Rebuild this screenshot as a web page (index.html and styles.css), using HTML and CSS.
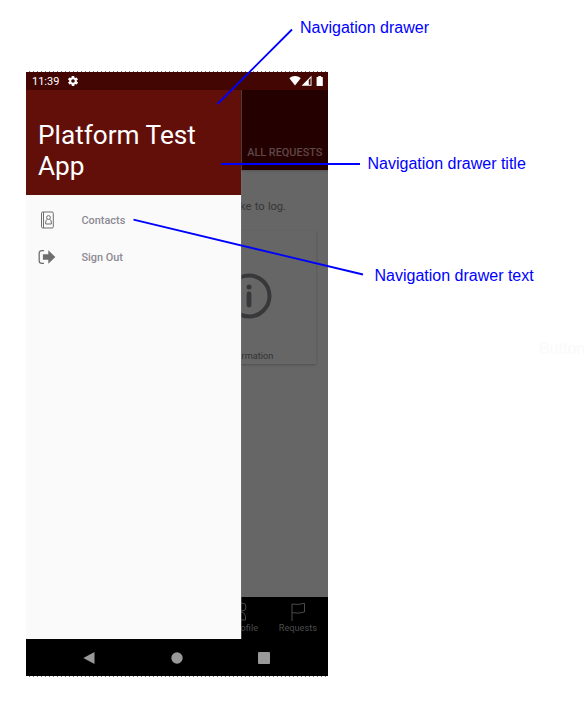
FILE: index.html
```html
<!DOCTYPE html>
<html lang="en">
<head>
<meta charset="utf-8">
<title>Navigation drawer</title>
<link rel="stylesheet" href="styles.css">
</head>
<body>
<main class="figure">
  <section class="phone">
    <header class="status">
      <span class="time">11:39</span>
      <svg class="gear" viewBox="0 0 24 24" width="12" height="12"><path fill="#fff" fill-rule="evenodd" d="M19.4 13c.1-.6.1-1.400 0-2l2.100-1.600c.2-.2.3-.4.1-.7l-2-3.400c-.1-.2-.4-.3-.6-.2l-2.500 1c-.5-.4-1.100-.7-1.700-1l-.4-2.600c0-.3-.2-.5-.5-.5h-4c-.3 0-.5.2-.5.500l-.4 2.600c-.6.3-1.200.6-1.700 1l-2.500-1c-.2-.1-.5 0-.6.2l-2 3.400c-.1.3-.1.500.1.700L4.600 11c-.1.6-.1 1.400 0 2l-2.100 1.600c-.2.2-.2.500-.1.700l2 3.400c.1.2.4.3.6.2l2.500-1c.5.4 1.100.7 1.700 1l.4 2.600c0 .3.2.5.500.5h4c.3 0 .5-.2.500-.5l.4-2.600c.6-.3 1.200-.6 1.700-1l2.500 1c.2.1.500 0 .6-.2l2-3.400c.2-.2.1-.5-.1-.7zM12 15.600a3.600 3.600 0 1 1 0-7.200 3.600 3.600 0 0 1 0 7.200z"/></svg>
      <svg class="signals" viewBox="0 0 36 12" width="36" height="12">
        <path fill="#fff" d="M.4 3.300C3.500.2 8.600.2 11.700 3.300L6 10.600z"/>
        <path fill="#fff" d="M12.600 10.700L22.500.7v10z"/>
        <path fill="#430603" d="M19.800 4.900l1.800-1.800v6.700h-1.800z"/>
        <path fill="#fff" d="M27.600 2h1.700V.9h2.800V2h1.700v8.900h-6.200z"/>
      </svg>
    </header>
    <div class="screen">
      <div class="page">
        <div class="appbar"><span>ALL REQUESTS</span></div>
        <div class="content">
          <p class="intro">like to log.</p>
          <article class="card">
            <svg class="info" viewBox="0 0 46 46" width="46" height="46"><circle cx="23" cy="23" r="20.500" fill="none" stroke="#38383b" stroke-width="4"/><circle cx="23" cy="14" r="2.500" fill="#38383b"/><path d="M23 21v11" stroke="#38383b" stroke-width="4.800" stroke-linecap="round"/></svg>
            <span>Information</span>
          </article>
        </div>
        <nav class="tabs">
          <div class="tab">
            <svg viewBox="0 0 18 20" width="18" height="20" fill="none" stroke="#484848"><circle cx="6" cy="5" r="4"/><path d="M1 18v-3q0-4 3-5h2q3.500 1 3.500 5v3z"/></svg>
            <span>Profile</span>
          </div>
          <div class="tab">
            <svg viewBox="0 0 18 20" width="18" height="20" fill="none" stroke="#4c4c4c"><path d="M3 19V2q6 1.200 12.500-.700v8.700Q9 12 3 10.600"/></svg>
            <span>Requests</span>
          </div>
        </nav>
      </div>
      <aside class="drawer">
        <h1>Platform Test App</h1>
        <ul>
          <li>
            <svg viewBox="0 0 18 18" width="18" height="18" fill="none" stroke="#6e6e6e"><rect x="3.500" y="1" width="11.800" height="16" rx="1.200"/><path d="M5.500 1v16"/><circle cx="10.500" cy="6.500" r="1.900"/><path d="M9.300 8.400Q7.700 9 7.700 11v2h5.600v-2q0-2-1.600-2.600"/></svg>
            <span>Contacts</span>
          </li>
          <li>
            <svg viewBox="0 0 18 18" width="18" height="18"><path d="M6 2.700H4Q1.200 2.700 1.200 5v8q0 2.300 2.800 2.300H6" fill="none" stroke="#6e6e6e" stroke-width="1.300"/><path d="M4.900 6.300h5.400V2.300L17.300 9l-7 6.700v-4h-5.400z" fill="#6e6e6e"/></svg>
            <span>Sign Out</span>
          </li>
        </ul>
      </aside>
    </div>
    <footer class="system">
      <svg viewBox="0 0 12 12" width="12" height="12"><path d="M.3 6L11.500 0v12z" fill="#999"/></svg>
      <svg viewBox="0 0 12 12" width="12" height="12"><circle cx="6" cy="6" r="5.700" fill="#999"/></svg>
      <svg viewBox="0 0 12 12" width="12" height="12"><rect width="12" height="12" rx="1" fill="#999"/></svg>
    </footer>
  </section>
  <svg class="leaders" viewBox="0 0 584 703" width="584" height="703" stroke="#00f" stroke-width="1.800"><path d="M292 29.500L217.500 104M221 164H360M133.500 219.700L363 274.500"/></svg>
  <span class="note note-drawer">Navigation drawer</span>
  <span class="note note-title">Navigation drawer title</span>
  <span class="note note-text">Navigation drawer text</span>
  <span class="note note-button">Button</span>
</main>
</body>
</html>
```
FILE: styles.css
```css
* { box-sizing: border-box; }
body { margin: 0; background: #fff; font-family: Roboto, sans-serif; }
.figure { position: relative; width: 584px; height: 703px; padding: 71px 0 0 26px; overflow: hidden; }
.phone { width: 302.400px; }
.phone::before, .phone::after { content: ""; display: block; height: 1px; background: repeating-linear-gradient(90deg, #fff 0 3px, #777 3px 4px); }
.status { height: 18px; display: flex; align-items: center; padding: 0 3px 0 6px; background: #430603; color: #fff; }
.time { font-size: 11px; width: 35px; line-height: 18px; padding-top: 1px; }
.gear { display: block; }
.signals { margin-left: auto; }
.screen { position: relative; height: 549.500px; overflow: hidden; }
.page { height: 100%; display: flex; flex-direction: column; background: #666; }
.appbar { height: 80px; padding: 0 6px 9px 0; display: flex; align-items: flex-end; justify-content: flex-end; background: #250000; color: #5e4747; font-size: 10.900px; font-weight: 500; line-height: 16px; box-shadow: 0 1px 2px #555; }
.content { flex: 1; display: flex; flex-direction: column; align-items: flex-end; padding: 29px 12px 0 0; }
.intro { margin: 0 30.500px 16px 0; font-size: 11.200px; letter-spacing: -.1px; word-spacing: .8px; line-height: 16px; color: #363639; }
.card { width: 134px; height: 133px; display: flex; flex-direction: column; align-items: center; padding: 42px 0 0; background: #666; box-shadow: 0 1px 2px #505050; color: #333; font-size: 9.200px; }
.card span { margin-top: 31px; line-height: 12px; }
.tabs { height: 43px; display: flex; justify-content: flex-end; padding: 5px 5px 0 0; background: #000; color: #4c4c4c; font-size: 9.200px; }
.tab { width: 51px; display: flex; flex-direction: column; align-items: center; line-height: 12px; }
.tab:first-child { margin-right: 2px; }
.drawer { position: absolute; left: 0; top: 0; width: 215.400px; height: 549px; background: #fafafa; border-right: 0; box-shadow: .5px 0 0 #777; }
.drawer h1 { height: 105px; margin: 0; padding: 30px 12px 0; background: #620f0a; color: #fff; font-size: 26.200px; line-height: 31px; font-weight: 400; }
.drawer ul { list-style: none; margin: 0; padding: 6px 0 0 12px; }
.drawer li { height: 37px; display: flex; align-items: center; gap: 25.500px; color: #8d8a94; font-size: 10.900px; font-weight: 500; }
.drawer li span { padding-top: 1px; }
.system { height: 36.500px; display: flex; align-items: center; gap: 75.500px; padding-left: 57px; background: #000; }
.leaders { position: absolute; left: 0; top: 0; }
.note { position: absolute; color: #00f; font: 16px/20px "Liberation Sans", sans-serif; white-space: nowrap; }
.note-drawer { left: 300px; top: 18px; }
.note-title { left: 367.500px; top: 154px; }
.note-text { left: 374.500px; top: 266px; }
.note-button { left: 539px; top: 339px; color: #fafafa; }
```
